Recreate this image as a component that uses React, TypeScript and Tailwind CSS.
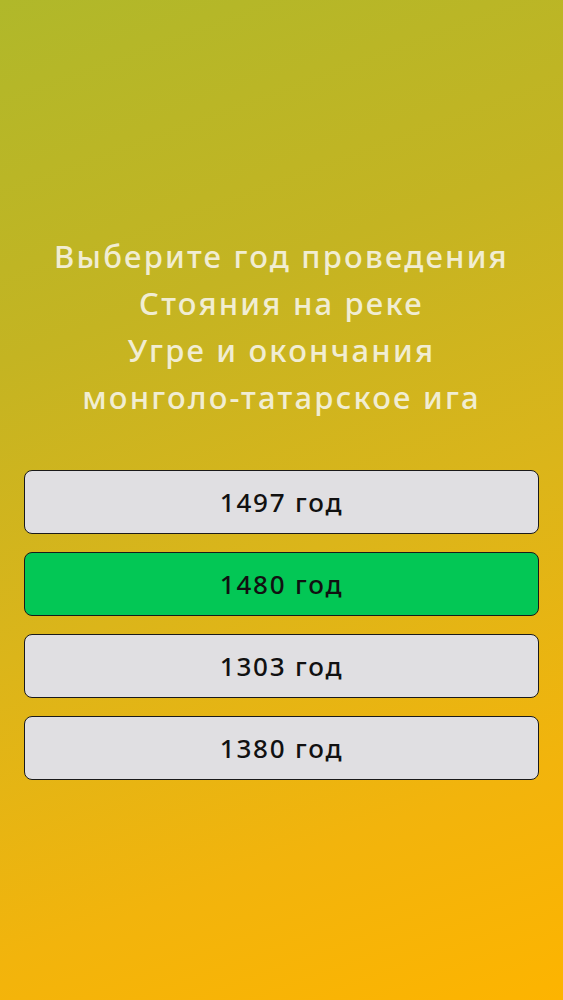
import React from "react";

const options = [
  { label: "1497 год", correct: false },
  { label: "1480 год", correct: true },
  { label: "1303 год", correct: false },
  { label: "1380 год", correct: false },
];

export default function App() {
  return (
    <div
      className="w-[563px] h-[1000px] flex flex-col items-center bg-[linear-gradient(160deg,#b0b82a_0%,#c4b422_30%,#dbb51a_55%,#f2b40c_80%,#fdb400_100%)]"
      style={{ fontFamily: '"Noto Sans", "Open Sans", sans-serif' }}
    >
      <div className="pt-[233px] text-center text-[#f1edd2] text-[31px] font-medium leading-[47px] tracking-[2.2px]">
        <div>Выберите год проведения</div>
        <div>Стояния на реке</div>
        <div>Угре и окончания</div>
        <div>монголо-татарское ига</div>
      </div>
      <div className="mt-[49px] w-[515px] flex flex-col gap-[18px]">
        {options.map((o) => (
          <div
            key={o.label}
            className={`h-[64px] rounded-[8px] border-[1.5px] border-[#1a1a1a] flex items-center justify-center text-[26px] font-medium tracking-[1.8px] text-[#111] ${
              o.correct ? "bg-[#03c755]" : "bg-[#e0dfe2]"
            }`}
          >
            {o.label}
          </div>
        ))}
      </div>
    </div>
  );
}
